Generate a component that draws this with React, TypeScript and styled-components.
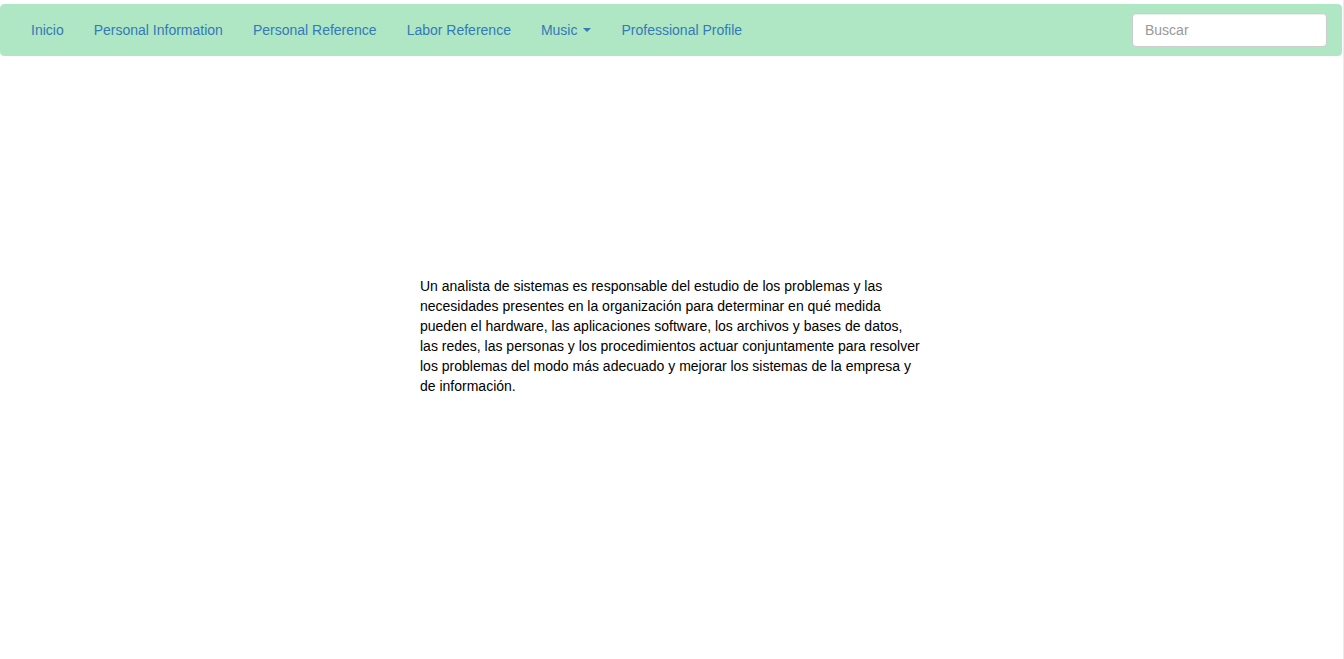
import React from "react";
import styled, { createGlobalStyle } from "styled-components";

const GlobalStyle = createGlobalStyle`
  html, body {
    margin: 0;
    padding: 0;
    background: #ffffff;
  }
  body {
    font-family: "Liberation Sans", Arial, Helvetica, sans-serif;
    font-size: 14px;
    line-height: 20px;
    color: #000;
  }
  * { box-sizing: border-box; }
`;

const Page = styled.div`
  width: 1344px;
  height: 659px;
  border-right: 1px solid #ebebeb;
  padding-top: 4px;
  overflow: hidden;
`;

const Navbar = styled.nav`
  width: 1342px;
  min-height: 52px;
  background: #afe6c4;
  border: 1px solid #afe6c4;
  border-radius: 4px;
  display: flex;
  align-items: flex-start;
  justify-content: space-between;
  padding: 0 14px 0 15px;
`;

const NavList = styled.ul`
  list-style: none;
  margin: 0;
  padding: 0;
  display: flex;
`;

const NavItem = styled.li`
  display: block;
`;

const NavLink = styled.a`
  display: flex;
  align-items: center;
  padding: 15px;
  line-height: 20px;
  color: #337ab7;
  text-decoration: none;
  cursor: pointer;
`;

const Caret = styled.span`
  display: inline-block;
  width: 0;
  height: 0;
  margin-left: 6px;
  border-top: 4px solid #337ab7;
  border-left: 4px solid transparent;
  border-right: 4px solid transparent;
`;

const SearchForm = styled.form`
  margin: 8px 0 0 0;
  display: flex;
`;

const SearchInput = styled.input`
  width: 195px;
  height: 34px;
  padding: 6px 12px;
  font-family: "Liberation Sans", Arial, sans-serif;
  font-size: 14px;
  color: #555;
  background: #fff;
  border: 1px solid #ccc;
  border-radius: 4px;
  box-shadow: inset 0 1px 1px rgba(0, 0, 0, 0.075);
  outline: none;
  &::placeholder {
    color: #999;
  }
`;

const Content = styled.main`
  width: 1342px;
  display: flex;
  justify-content: center;
  padding-top: 220px;
`;

const Paragraph = styled.p`
  width: 502px;
  margin: 0;
  font-size: 14px;
  line-height: 20px;
  color: #000;
`;

const links = [
  "Inicio",
  "Personal Information",
  "Personal Reference",
  "Labor Reference",
];

export default function App() {
  return (
    <>
      <GlobalStyle />
      <Page>
        <Navbar>
          <NavList>
            {links.map((l) => (
              <NavItem key={l}>
                <NavLink>{l}</NavLink>
              </NavItem>
            ))}
            <NavItem>
              <NavLink>
                Music
                <Caret />
              </NavLink>
            </NavItem>
            <NavItem>
              <NavLink>Professional Profile</NavLink>
            </NavItem>
          </NavList>
          <SearchForm onSubmit={(e) => e.preventDefault()}>
            <SearchInput type="text" placeholder="Buscar" />
          </SearchForm>
        </Navbar>
        <Content>
          <Paragraph>
            Un analista de sistemas es responsable del estudio de los problemas y
            las necesidades presentes en la organización para determinar en qué
            medida pueden el hardware, las aplicaciones software, los archivos y
            bases de datos, las redes, las personas y los procedimientos actuar
            conjuntamente para resolver los problemas del modo más adecuado y
            mejorar los sistemas de la empresa y de información.
          </Paragraph>
        </Content>
      </Page>
    </>
  );
}
